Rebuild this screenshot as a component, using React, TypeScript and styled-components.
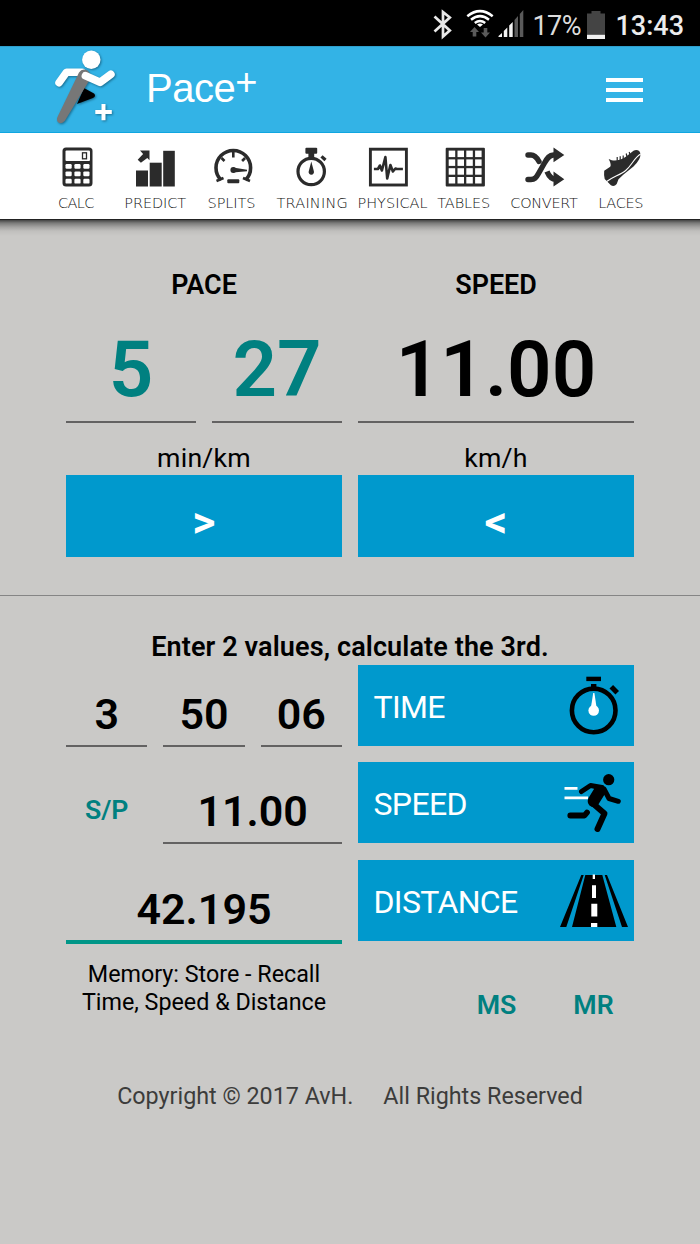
import React from "react";
import styled, { createGlobalStyle } from "styled-components";

const Global = createGlobalStyle`
  * { box-sizing: border-box; }
  body { margin: 0; background: #cac9c7; font-family: Roboto, "Liberation Sans", sans-serif; color: #000; }
`;

const Screen = styled.div`
  width: 700px;
  height: 1244px;
  display: flex;
  flex-direction: column;
  background: #cac9c7;
  overflow: hidden;
`;

const StatusBar = styled.div`
  height: 46px;
  background: #000;
  color: #ececec;
  display: flex;
  align-items: center;
  justify-content: flex-end;
  padding: 3px 16px 0 0;
  flex: none;
`;
const StatusIcons = styled.svg`
  margin-top: 1px;
`;
const Percent = styled.span`
  font-size: 27px;
  width: 50px;
  margin-left: 6px;
  letter-spacing: -0.6px;
  color: #dcdcdc;
  line-height: 32px;
  padding-top: 3px;
`;
const BatteryIcon = styled.svg`
  margin: 0 10px 0 5px;
`;
const Clock = styled.span`
  font-size: 27px;
  font-weight: 500;
  line-height: 32px;
  padding-top: 3px;
`;

const Header = styled.header`
  height: 87px;
  flex: none;
  background: #33b3e6;
  border-top: 1px solid #2f9fcc;
  border-bottom: 1px solid #0fa6e0;
  display: flex;
  align-items: center;
  padding: 0 57px 0 52px;
`;
const Title = styled.h1`
  margin: 0 auto 0 26px;
  padding-bottom: 3px;
  display: flex;
  align-items: flex-start;
  font: 400 40px/46px "Liberation Sans", Arial, sans-serif;
  letter-spacing: -0.5px;
  color: #fff;
`;
const TitlePlus = styled.span`
  font-size: 38px;
  line-height: 34px;
`;
const Menu = styled.button`
  border: 0;
  padding: 0;
  background: none;
  width: 37px;
  display: flex;
  flex-direction: column;
  gap: 6px;
`;
const MenuBar = styled.span`
  height: 4px;
  background: #fff;
`;

const Nav = styled.nav`
  height: 87px;
  flex: none;
  background: #fff;
  border-bottom: 1px solid #222;
  display: grid;
  grid-template-columns: repeat(8, 77.75px);
  padding: 13px 0 0 38.6px;
`;
const NavItem = styled.div`
  display: flex;
  flex-direction: column;
  align-items: center;
`;
const NavIcon = styled.svg`
  display: block;
  width: 44px;
  height: 42px;
  flex: none;
`;
const NavLabel = styled.span<{ $shift: number; $track: number }>`
  margin-top: 5px;
  font: 200 14.5px/20px "DejaVu Sans", sans-serif;
  letter-spacing: ${(p) => p.$track}px;
  margin-left: ${(p) => p.$shift}px;
  color: #111;
  white-space: nowrap;
`;
const NavShadow = styled.div`
  height: 16px;
  flex: none;
  background: linear-gradient(#444 0, #7a7a79 3px, #a3a2a1 7px, #c0bfbd 11px, #cac9c7 16px);
`;

const Converter = styled.section`
  height: 360px;
  flex: none;
  padding: 33px 66px 0;
  display: grid;
  grid-template-columns: 276px 276px;
  column-gap: 16px;
  align-content: start;
  border-bottom: 1px solid #858585;
`;
const Column = styled.div`
  display: flex;
  flex-direction: column;
  text-align: center;
`;
const ColumnTitle = styled.h2`
  margin: 0;
  font-size: 26.9px;
  font-weight: 600;
  line-height: 32px;
`;
const BigFields = styled.div`
  display: flex;
  gap: 16px;
  margin-top: 22px;
`;
const BigField = styled.div<{ $accent?: boolean }>`
  flex: 1;
  height: 100px;
  padding-top: 3px;
  border-bottom: 2px solid #636262;
  font-size: 78px;
  font-weight: 600;
  line-height: 88px;
  color: ${(p) => (p.$accent ? "#008080" : "#000")};
`;
const Unit = styled.div`
  margin-top: 19px;
  font-size: 26.7px;
  line-height: 32px;
  letter-spacing: 0.2px;
`;
const ConvertButton = styled.button`
  margin-top: 1px;
  height: 81.5px;
  border: 0;
  background: #0099cd;
  color: #fff;
  font: 600 45px/81px Roboto, sans-serif;
  padding: 6px 0 0;
`;

const Calculator = styled.section`
  flex: none;
  padding: 35px 66px 0;
`;
const Hint = styled.p`
  margin: 0 0 1.5px;
  text-align: center;
  font-size: 27px;
  font-weight: 600;
  line-height: 32px;
  letter-spacing: 0.12px;
`;
const CalcRow = styled.div`
  display: grid;
  grid-template-columns: 276px 276px;
  column-gap: 16px;
  height: 81px;
  margin: 0 0 16.5px;
`;
const Fields = styled.div`
  display: grid;
  grid-template-columns: repeat(3, 1fr);
  column-gap: 16px;
  height: 82px;
`;
const Field = styled.div<{ $span?: number; $active?: boolean }>`
  grid-column: span ${(p) => p.$span || 1};
  height: ${(p) => (p.$active ? 84 : 82)}px;
  border-bottom: ${(p) => (p.$active ? "4px solid #009688" : "2px solid #636262")};
  text-align: center;
  font-size: 43px;
  font-weight: 600;
  line-height: 50px;
  padding-top: 24px;
`;
const TextButton = styled.button<{ $drop?: number }>`
  border: 0;
  padding: ${(p) => p.$drop || 0}px 0 0;
  background: none;
  color: #008080;
  font: 600 26.7px/32px Roboto, sans-serif;
`;
const ActionButton = styled.button`
  border: 0;
  padding: 3px 4px 0 15.5px;
  background: #0099cd;
  color: #fff;
  display: flex;
  align-items: center;
  justify-content: space-between;
  font: 400 32px/40px Roboto, sans-serif;
  letter-spacing: -0.65px;
  height: 81px;
`;
const ActionIcon = styled.svg`
  margin-top: -3px;
  flex: none;
`;
const MemoryRow = styled.div`
  display: grid;
  grid-template-columns: 276px 276px;
  column-gap: 16px;
`;
const MemoryText = styled.p`
  margin: 3px 0 0;
  text-align: center;
  font-size: 23.3px;
  line-height: 28px;
`;
const MemoryButtons = styled.div`
  display: grid;
  grid-template-columns: repeat(2, 81px);
  column-gap: 16px;
  justify-content: end;
  padding-top: 32px;
`;
const Footer = styled.footer`
  display: flex;
  justify-content: center;
  gap: 30px;
  margin-top: 59px;
  font-size: 23.3px;
  line-height: 32px;
  color: #3c3c3b;
`;

const ink = "#2b2b2b";

const Calc = () => (
  <>
    <rect x="63" y="147.5" width="30" height="39" rx="3.5" fill={ink} />
    <rect x="66" y="150.5" width="24.5" height="10.5" rx="1" fill="#fff" />
    <rect x="83" y="152.8" width="4" height="6" fill="none" stroke={ink} strokeWidth="1.3" />
    {[0, 1, 2].map((r) =>
      [0, 1, 2].map((c) => (
        <rect key={`${r}${c}`} x={66 + c * 8.9} y={164 + r * 7.4} width="6.2" height="4.8" rx="1.2" fill="#fff" />
      ))
    )}
  </>
);
const Predict = () => (
  <g fill={ink}>
    <rect x="136.3" y="170.5" width="12" height="16" />
    <rect x="150" y="162.7" width="12" height="23.8" />
    <rect x="163.5" y="150.8" width="11.6" height="35.7" />
    <path d="M140.3 150.6H149.8V160.3L147.6 158L141.2 162.8L138 159.8L143.4 154.1Z" />
  </g>
);
const Splits = () => (
  <>
    <path d="M221 180A17.3 17.3 0 1 1 245.6 180" fill="none" stroke={ink} strokeWidth="3.6" />
    <path d="M216.5 181L223.5 178M250 181L243 178M233.3 152V157.5M221.5 158L224.5 161M245.1 158L242.1 161" stroke={ink} strokeWidth="2.6" />
    <rect x="227.3" y="179.3" width="12" height="4" rx="1" fill={ink} />
    <circle cx="233.3" cy="170" r="2.9" fill={ink} />
    <path d="M233 167.6L247 169.7V171.3L233 172.6Z" fill={ink} />
  </>
);
const Training = () => (
  <>
    <circle cx="311" cy="171.5" r="13.2" fill="none" stroke={ink} strokeWidth="3.2" />
    <rect x="305.2" y="147.8" width="11.8" height="6" rx="1" fill={ink} />
    <rect x="308.2" y="153" width="5.8" height="5" fill={ink} />
    <path d="M321.3 156.3L325.3 160" stroke={ink} strokeWidth="3.2" />
    <path d="M311.1 161.5L313.6 171A2.7 2.7 0 1 1 308.6 171Z" fill={ink} />
  </>
);
const Physical = () => (
  <g fill="none" stroke={ink}>
    <rect x="371" y="149.2" width="36" height="35.8" strokeWidth="2.9" />
    <path d="M374.5 169H378.5L380.5 165.5L382.5 170.5L386 157L387.8 178.5L391 165L393.5 171.5L396 168.5L397.5 169H403.5" strokeWidth="2.6" strokeLinejoin="round" />
  </g>
);
const Tables = () => (
  <>
    <rect x="446" y="147.8" width="39.2" height="38.7" rx="1" fill={ink} />
    {[0, 1, 2, 3].map((r) =>
      [0, 1, 2, 3].map((c) => (
        <rect key={`${r}${c}`} x={449 + c * 8.8} y={150.6 + r * 8.8} width="6.5" height="6.5" fill="#fff" />
      ))
    )}
  </>
);
const Convert = () => (
  <>
    <g fill="none" stroke={ink} strokeWidth="5.4">
      <path d="M528 179.5H531C534.5 179.5 536 178 538.5 173.5L544.5 163C547.5 157.5 549.5 155 553.5 155H556" strokeLinecap="round" />
      <path d="M528 155H531C534.5 155 536.5 157 539 161.5" strokeLinecap="round" />
      <path d="M547 171.5C549 176.5 551.5 179.3 556 179.3" />
    </g>
    <path d="M553.5 147.5L564.3 155L553.5 162.3ZM553.5 171.5L564.3 179.3L553.5 186.6Z" fill={ink} />
  </>
);
const Laces = () => (
  <>
    <path d="M604 170.7L610 166.7Q611.5 165 608.5 159L611.5 160.3Q619 161.5 626 156.5L633.3 150.7Q636.5 149.3 639 151Q641.5 154 639 159.3Q637 163 633.3 166.5L623.3 174.5L618.3 179.3L616.5 184Q614 187 610.7 185.3L604.5 179Q603.5 175 604 170.7Z" fill={ink} />
    <path d="M606.5 181.5C613 176.5 620 175 625.5 170.5C632 165 634 157.5 640.5 154" fill="none" stroke="#fff" strokeWidth="1.1" />
    <path d="M617 157V161M620 156.3V160.5M623 155.5V160M626 153.5L627 157.5M629 152L630 155.5" stroke={ink} strokeWidth="1.2" />
  </>
);

const navItems = [
  { label: "CALC", x: 77.5, shift: -3, track: -0.6, Icon: Calc },
  { label: "PREDICT", x: 155.3, shift: 0, track: -0.1, Icon: Predict },
  { label: "SPLITS", x: 233, shift: -3, track: -0.1, Icon: Splits },
  { label: "TRAINING", x: 310.8, shift: 3, track: 0.2, Icon: Training },
  { label: "PHYSICAL", x: 388.6, shift: 8, track: 0, Icon: Physical },
  { label: "TABLES", x: 466.3, shift: -5, track: -0.1, Icon: Tables },
  { label: "CONVERT", x: 544, shift: 0, track: -0.3, Icon: Convert },
  { label: "LACES", x: 621.8, shift: -2, track: -0.3, Icon: Laces },
];

const TimeIcon = () => (
  <ActionIcon width="72" height="80" viewBox="558 665 72 80">
    <circle cx="593.7" cy="710.4" r="21.8" fill="none" stroke="#000" strokeWidth="4.6" />
    <rect x="586.3" y="676.7" width="14.7" height="4.4" />
    <rect x="591" y="684" width="5.4" height="5" />
    <path d="M611.3 686.8L617.2 692.8" stroke="#000" strokeWidth="5" />
    <circle cx="593.7" cy="710.4" r="5.3" fill="#fff" />
    <path d="M593.2 693H594.4L596.5 707H591Z" fill="#fff" />
  </ActionIcon>
);
const SpeedIcon = () => (
  <ActionIcon width="72" height="80" viewBox="558 763 72 80">
    <path d="M564.5 788.3H577.5M564.5 797.9H588" stroke="#fff" strokeWidth="2.8" />
    <circle cx="608.7" cy="779.7" r="5.6" />
    <path d="M592 784.5L603 786.5Q608 788.5 605.5 793L598 805Q594 809 589.5 805.5Q586.5 802 588.5 798L594 789Z" />
    <g fill="none" stroke="#000" strokeLinecap="round" strokeLinejoin="round">
      <path d="M581.5 791.5L590.5 785.5L602 787.5" strokeWidth="5" />
      <path d="M604 789L609 798.5L618.3 801.3" strokeWidth="5" />
      <path d="M593.5 804L604.5 813.5L597.5 829" strokeWidth="6" />
      <path d="M570.3 815.5H584.5L587 812.5" strokeWidth="5.8" />
    </g>
  </ActionIcon>
);
const DistanceIcon = () => (
  <ActionIcon width="72" height="80" viewBox="558 860 72 80">
    <path d="M585.3 875H602.3L616.3 927H572ZM581.3 875H583.7L566.3 927H560ZM604.7 875H607L628 927H622Z" />
    <path d="M592.7 874.4H595V879H592.7ZM592 885.3H596V898H592ZM591.3 903.7H597.3V916.4H591.3ZM591 923H597.3V927H591Z" fill="#fff" />
  </ActionIcon>
);

const LogoMark = styled.svg`
  flex: none;
`;
const Logo = () => (
  <LogoMark width="68" height="82" viewBox="52 49 68 82">
    <g filter="drop-shadow(1px 1px 1px rgba(0,40,60,.5))">
      <path d="M84 88L94 93.5Q96.5 96 93 98L77 104Z" fill="#000" />
      <path d="M59 82.8L66.5 72.3H82" fill="none" stroke="#fff" strokeWidth="7.5" strokeLinecap="round" strokeLinejoin="round" />
      <circle cx="91.3" cy="59.7" r="9.2" fill="#fff" />
      <path d="M79 72.5Q82 68 87.5 70.5Q92 74 89.500 80L65 120.5Q62 124.5 58.500 122.500Q56 120.500 57.500 117Z" fill="#777" />
      <path d="M85.5 75.8L100 82.3L110.800 74.300" fill="none" stroke="#fff" strokeWidth="7.8" strokeLinecap="round" strokeLinejoin="round" />
      <path d="M95.3 112H111.8M103.5 104V120.3" stroke="#fff" strokeWidth="4" />
    </g>
  </LogoMark>
);

export default function App() {
  return (
    <Screen>
      <Global />
      <StatusBar>
        <StatusIcons width="94" height="40" viewBox="431 5 94 40">
          <path d="M433.5 16.5L448.8 30.5L442 36.5V12L448.8 17.5L433.5 31.5" fill="none" stroke="#e8e8e8" strokeWidth="2.7" />
          <g fill="none" stroke="#fff" strokeWidth="2.5">
            <path d="M466.3 16.2Q479 6 491.7 16.2" />
            <path d="M470 19.8Q479 12.5 488 19.8" />
            <path d="M473.8 23Q479 19 484.2 23" />
          </g>
          <path d="M476 24.5Q479 22.5 482 24.5L479 27Z" fill="#fff" />
          <path d="M473.5 27L478 32H475.3V36.5H471.7V32H469ZM484.5 37.5L480 32.5H482.7V28H486.3V32.5H489Z" fill="#5a5a5a" />
          <path d="M497.5 37V36L501 33V37ZM502.8 37V31L506.3 27.5V37ZM508.2 37V25.5L511.7 22V37Z" fill="#f2f2f2" />
          <path d="M513.5 37V20L517 16V37ZM518.8 37V14L522.3 10V37Z" fill="#5a5a5a" />
        </StatusIcons>
        <Percent>17%</Percent>
        <BatteryIcon width="18" height="28" viewBox="0 0 18 28">
          <path d="M4.5 0H13.5V2.5H18V28H0V2.5H4.5Z" fill="#444" />
          <path d="M0 23.8H18V28H0Z" fill="#f0f0f0" />
        </BatteryIcon>
        <Clock>13:43</Clock>
      </StatusBar>
      <Header>
        <Logo />
        <Title>
          Pace<TitlePlus>+</TitlePlus>
        </Title>
        <Menu aria-label="Menu">
          <MenuBar />
          <MenuBar />
          <MenuBar />
        </Menu>
      </Header>
      <Nav>
        {navItems.map(({ label, x, shift, track, Icon }) => (
          <NavItem key={label}>
            <NavIcon viewBox={`${x - 22} 146 44 42`}>
              <Icon />
            </NavIcon>
            <NavLabel $shift={shift} $track={track}>{label}</NavLabel>
          </NavItem>
        ))}
      </Nav>
      <NavShadow />
      <Converter>
        <Column>
          <ColumnTitle>PACE</ColumnTitle>
          <BigFields>
            <BigField $accent>5</BigField>
            <BigField $accent>27</BigField>
          </BigFields>
          <Unit>min/km</Unit>
          <ConvertButton>&gt;</ConvertButton>
        </Column>
        <Column>
          <ColumnTitle>SPEED</ColumnTitle>
          <BigFields>
            <BigField>11.00</BigField>
          </BigFields>
          <Unit>km/h</Unit>
          <ConvertButton>&lt;</ConvertButton>
        </Column>
      </Converter>
      <Calculator>
        <Hint>Enter 2 values, calculate the 3rd.</Hint>
        <CalcRow>
          <Fields>
            <Field>3</Field>
            <Field>50</Field>
            <Field>06</Field>
          </Fields>
          <ActionButton>TIME<TimeIcon /></ActionButton>
        </CalcRow>
        <CalcRow>
          <Fields>
            <TextButton $drop={13}>S/P</TextButton>
            <Field $span={2}>11.00</Field>
          </Fields>
          <ActionButton>SPEED<SpeedIcon /></ActionButton>
        </CalcRow>
        <CalcRow>
          <Fields>
            <Field $span={3} $active>42.195</Field>
          </Fields>
          <ActionButton>DISTANCE<DistanceIcon /></ActionButton>
        </CalcRow>
        <MemoryRow>
          <MemoryText>
            Memory: Store - Recall
            <br />
            Time, Speed &amp; Distance
          </MemoryText>
          <MemoryButtons>
            <TextButton>MS</TextButton>
            <TextButton>MR</TextButton>
          </MemoryButtons>
        </MemoryRow>
        <Footer>
          <span>Copyright © 2017 AvH.</span>
          <span>All Rights Reserved</span>
        </Footer>
      </Calculator>
    </Screen>
  );
}
